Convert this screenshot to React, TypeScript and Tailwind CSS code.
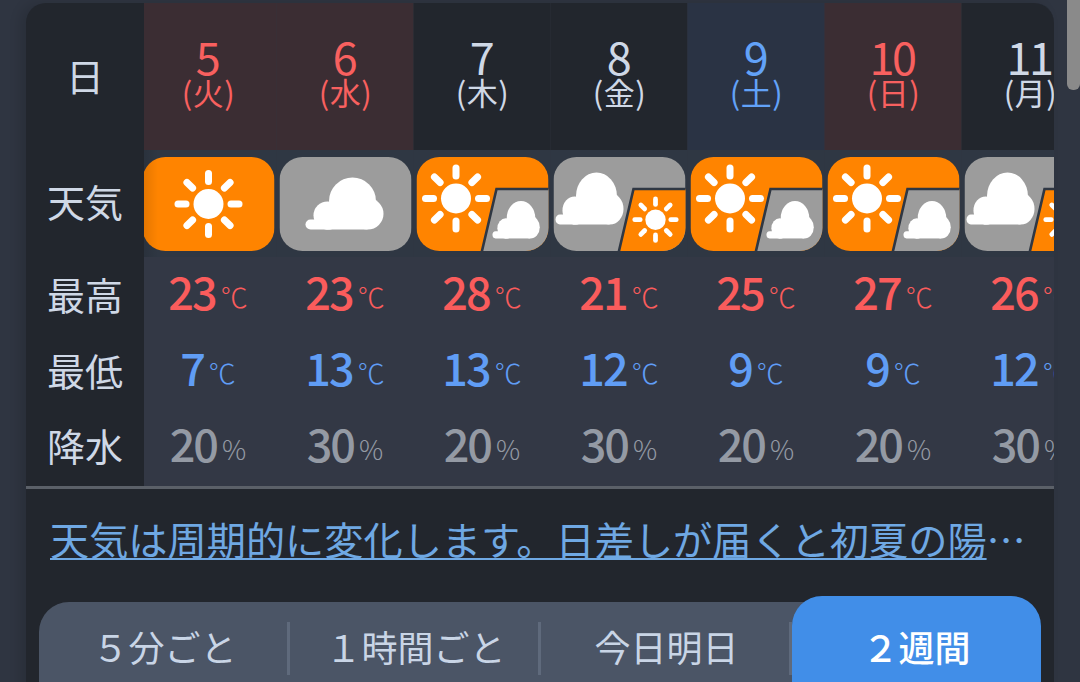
const jp = 'font-["Noto_Sans_CJK_JP",sans-serif]';

type Kind = 'sun' | 'cloud' | 'sunCloud' | 'cloudSun';

const days: { d: string; w: string; kind: Kind; hi: string; lo: string; rain: string; tone: string }[] = [
  { d: '5', w: '火', kind: 'sun', hi: '23', lo: '7', rain: '20', tone: 'red' },
  { d: '6', w: '水', kind: 'cloud', hi: '23', lo: '13', rain: '30', tone: 'red' },
  { d: '7', w: '木', kind: 'sunCloud', hi: '28', lo: '13', rain: '20', tone: 'plain' },
  { d: '8', w: '金', kind: 'cloudSun', hi: '21', lo: '12', rain: '30', tone: 'plain' },
  { d: '9', w: '土', kind: 'sunCloud', hi: '25', lo: '9', rain: '20', tone: 'blue' },
  { d: '10', w: '日', kind: 'sunCloud', hi: '27', lo: '9', rain: '20', tone: 'red' },
  { d: '11', w: '月', kind: 'cloudSun', hi: '26', lo: '12', rain: '30', tone: 'plain' },
];

const toneClass: Record<string, string> = {
  red: 'bg-[#3b2d33] text-[#f8605f]',
  plain: 'bg-[#22262d] text-[#cfd8e6]',
  blue: 'bg-[#2a3344] text-[#62a2f8]',
};

const Sun = ({ x, y, s = 1 }: { x: number; y: number; s?: number }) => (
  <g transform={`translate(${x} ${y}) scale(${s})`} fill="#fff" stroke="#fff">
    <circle r="15" stroke="none" />
    {[0, 45, 90, 135, 180, 225, 270, 315].map((a) => (
      <line key={a} x1="22.5" x2="30.5" y1="0" y2="0" strokeWidth="7" strokeLinecap="round" transform={`rotate(${a})`} />
    ))}
  </g>
);

// drawn in a 78x52 box, scaled to fit
const Cloud = ({ x, y, sx = 1, sy = 1 }: { x: number; y: number; sx?: number; sy?: number }) => (
  <g transform={`translate(${x} ${y}) scale(${sx} ${sy})`} fill="#fff">
    <circle cx="47" cy="23.5" r="23.5" />
    <circle cx="62.3" cy="36.3" r="15.7" />
    <circle cx="22" cy="38" r="14" />
    <rect x="0" y="42" width="30" height="10" rx="5" />
    <rect x="20" y="30" width="42" height="22" />
  </g>
);

const WeatherIcon = ({ kind }: { kind: Kind }) => {
  const orange = '#ff8400';
  const gray = '#9c9c9c';
  const base = kind === 'sun' || kind === 'sunCloud' ? orange : gray;
  const second = kind === 'sunCloud' ? gray : orange;
  return (
    <svg viewBox="0 0 132 94" className="block h-[94px] w-[132px]">
      <defs>
        <clipPath id={`clip-${kind}`}>
          <rect width="132" height="94" rx="23" />
        </clipPath>
      </defs>
      <g clipPath={`url(#clip-${kind})`}>
        <rect width="132" height="94" fill={base} />
        {(kind === 'sunCloud' || kind === 'cloudSun') && (
          <path d="M80 32 H134 V96 H65 Z" fill={second} stroke="#2f3743" strokeWidth="2.6" />
        )}
      </g>
      {kind === 'sun' && <Sun x={66} y={47} />}
      {kind === 'cloud' && <Cloud x={26} y={20.5} />}
      {kind === 'sunCloud' && (
        <>
          <Sun x={39.5} y={41.5} />
          <Cloud x={76} y={44} sx={0.606} sy={0.72} />
        </>
      )}
      {kind === 'cloudSun' && (
        <>
          <Cloud x={2} y={15.5} sx={0.872} />
          <Sun x={102} y={62.7} s={0.68} />
        </>
      )}
    </svg>
  );
};

const Value = ({ n, unit, color }: { n: string; unit: string; color: string }) => (
  <div className={`flex h-[76px] items-center justify-center gap-[5px] ${color}`}>
    <span className="-translate-y-[5px] text-[45px] leading-none font-medium tracking-[-2px]">{n}</span>
    <span className="translate-y-[1px] text-[27px] leading-none font-light">{unit}</span>
  </div>
);

const Label = ({ text, h }: { text: string; h: string }) => (
  <div className={`flex items-center justify-center text-[38px] leading-none text-[#cfd8e6] ${h}`}>{text}</div>
);

const tabs = ['５分ごと', '１時間ごと', '今日明日'];

export default function App() {
  return (
    <div className={`relative h-[682px] w-[1080px] overflow-hidden bg-[#2f3541] pt-[3px] pl-[26px] ${jp}`}>
      <div className="absolute top-0 right-0 h-[90px] w-[13px] rounded-b-[6px] bg-[#8a8a8a]" />
      <div className="h-[720px] w-[1028px] overflow-hidden rounded-t-[20px] bg-[#22262d] shadow-[-6px_0_12px_rgba(0,0,0,0.12)]">
        <div className="flex h-[483px]">
          <div className="w-[118px] shrink-0">
            <Label text="日" h="h-[147px] pb-[3px]" />
            <Label text="天気" h="h-[107px] pb-[5px]" />
            <Label text="最高" h="h-[76px] pb-[3px]" />
            <Label text="最低" h="h-[76px] pb-[3px]" />
            <Label text="降水" h="h-[77px] pb-[5px]" />
          </div>
          <div className="relative flex-1 overflow-hidden bg-[#333845]">
            <div className="flex w-max -translate-x-[4.5px]">
              {days.map((day) => (
                <div key={day.d} className="w-[137px] shrink-0">
                  <div className={`flex h-[147px] flex-col items-center pt-[30px] ${toneClass[day.tone]}`}>
                    <span className="-translate-x-[1px] text-[45px] leading-[46px] tracking-[-2.5px]">{day.d}</span>
                    <span className="-mt-[5px] pl-[1px] text-[31px] leading-[36px] tracking-[0.5px]">({day.w})</span>
                  </div>
                  <div className="flex h-[107px] items-center justify-center bg-[#2f3743]">
                    <WeatherIcon kind={day.kind} />
                  </div>
                  <Value n={day.hi} unit="℃" color="text-[#fa5c5c]" />
                  <Value n={day.lo} unit="℃" color="text-[#609df5]" />
                  <Value n={day.rain} unit="%" color="text-[#949aa4]" />
                </div>
              ))}
            </div>
            <div className="absolute top-[147px] left-0 h-[107px] w-[14px] bg-gradient-to-r from-black/10 to-transparent" />
          </div>
        </div>
        <div className="h-[3px] bg-[#5b6068]" />
        <div className="px-[24px] pt-[25px]">
          <p className="w-[985px] truncate text-[39.2px] leading-[48px] text-[#6fa8e3] underline decoration-[2px] underline-offset-[3px]">
            天気は周期的に変化します。日差しが届くと初夏の陽気になるでしょう。
          </p>
        </div>
        <div className="mt-[40px] ml-[13px] flex h-[100px] w-[1002px] rounded-t-[30px] bg-[#4b5566]">
          {tabs.map((t) => (
            <div key={t} className="relative flex h-[92px] w-[251px] items-start justify-center pt-[19px]">
              <span className="text-[36px] leading-[50px] text-[#c9d5e6]">{t}</span>
              <span className="absolute top-[20px] right-0 h-[53px] w-[3px] bg-[#5f6a7c]" />
            </div>
          ))}
          <div className="-mt-[6px] flex h-[100px] flex-1 items-start justify-center rounded-t-[30px] bg-[#418ee8] pt-[25px]">
            <span className="text-[36px] leading-[50px] font-medium text-white">２週間</span>
          </div>
        </div>
      </div>
    </div>
  );
}
